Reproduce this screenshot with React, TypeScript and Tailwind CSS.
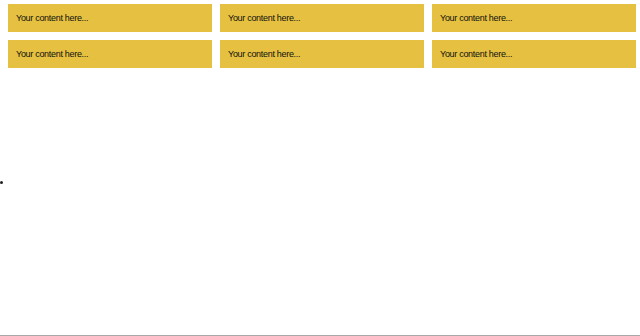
import React from 'react';

const items = Array.from({ length: 6 }, (_, i) => i);

export default function App() {
  return (
    <div className="relative h-[336px] w-[640px] bg-white font-['Liberation_Sans',Arial,sans-serif] overflow-hidden">
      <div className="grid grid-cols-3 gap-x-2 gap-y-2 pl-2 pr-1 pt-1">
        {items.map((i) => (
          <div key={i} className="h-7 flex items-center bg-[#e6c040] pl-2 pt-px text-[9px] tracking-[-0.3px] text-[#111]">
            Your content here...
          </div>
        ))}
      </div>
      {/* cursor speck */}
      <div className="absolute left-0 top-[181px] h-[3px] w-[3px] rounded-full bg-[#222]" />
      <div className="absolute bottom-0 left-0 h-px w-full bg-[#a8a8a8]" />
    </div>
  );
}
